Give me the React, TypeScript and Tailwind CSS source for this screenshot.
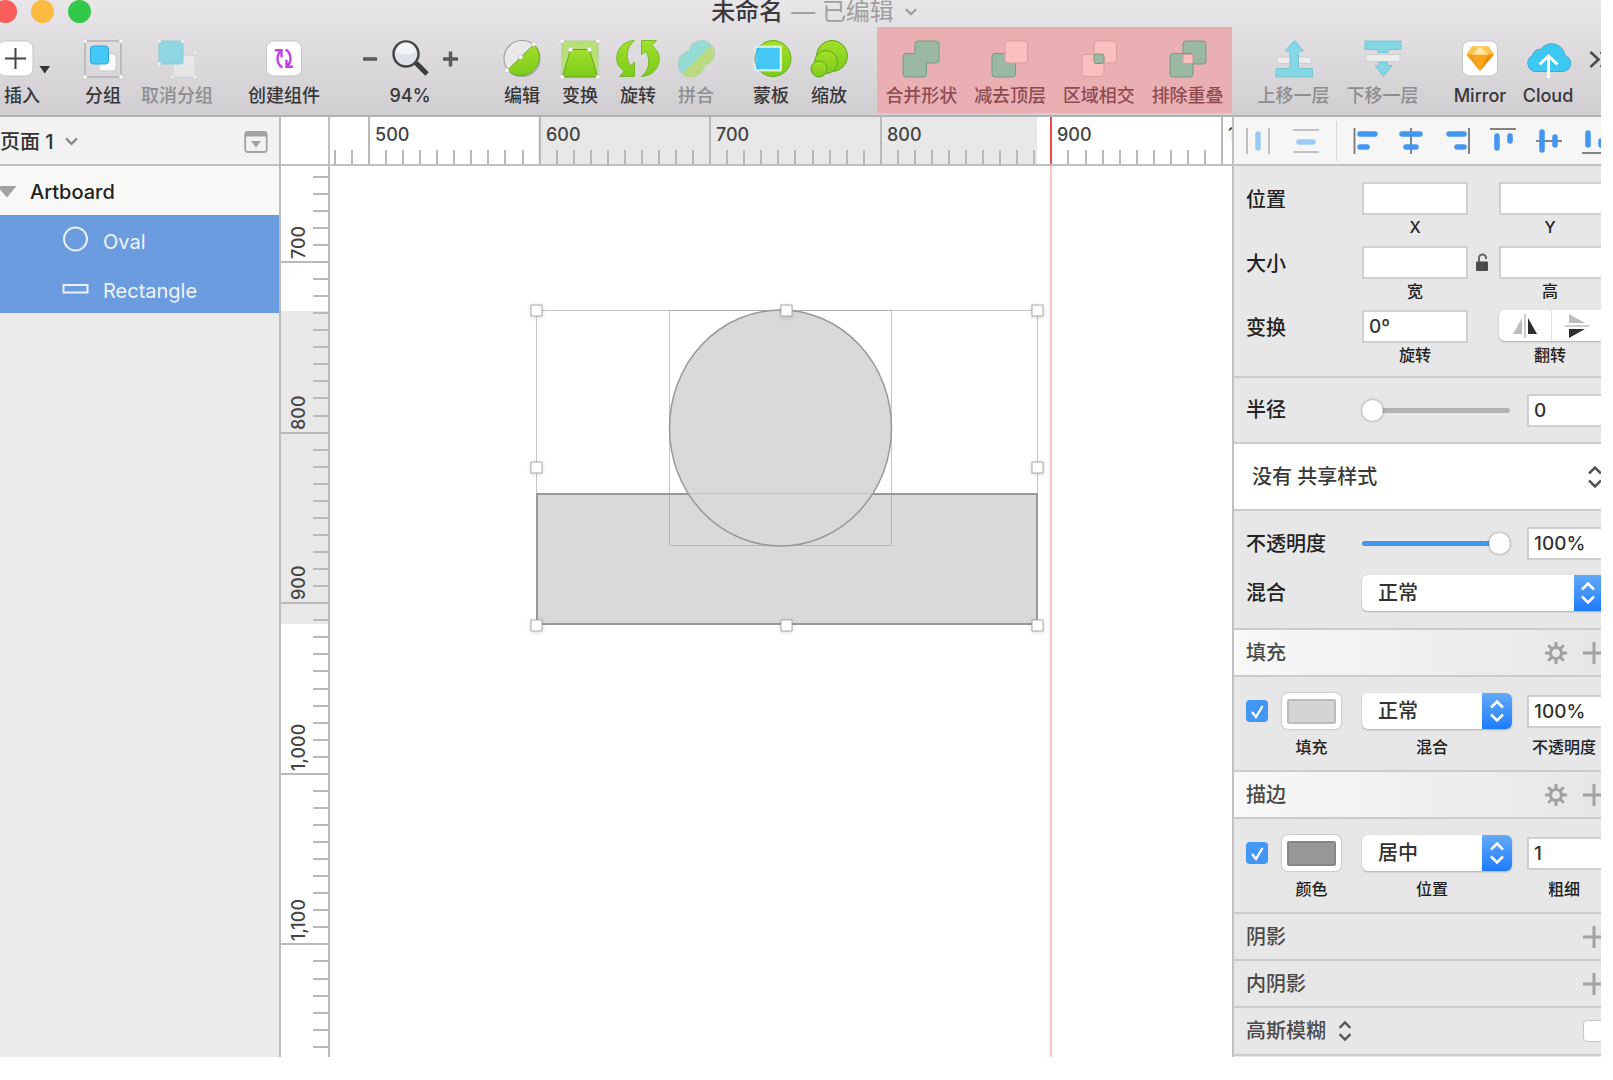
import React, { useState } from "react";
import { ChevronDown } from "lucide-react";

const GREEN = "#7ccb1c";
const BLUE = "#45c8f5";

type Shape = { children: React.ReactNode; w?: number; faded?: boolean };

function Icon({ children, w = 38, faded }: Shape) {
  return (
    <svg
      width={w}
      height={38}
      viewBox={`0 0 ${w} 38`}
      className={`overflow-visible ${faded ? "opacity-55" : ""}`}
      aria-hidden="true"
    >
      {children}
    </svg>
  );
}

function Dots({ points }: { points: number[][] }) {
  return (
    <>
      {points.map(([x, y]) => (
        <circle key={`${x}-${y}`} cx={x} cy={y} r="2.2" fill="#fff" stroke="#bbb" strokeWidth=".6" />
      ))}
    </>
  );
}

function Tool({
  label,
  width,
  muted,
  children,
}: {
  label: string;
  width: string;
  muted?: boolean;
  children: React.ReactNode;
}) {
  return (
    <button
      className={`flex shrink-0 flex-col items-center gap-1.5 whitespace-nowrap pt-[13px] text-lg leading-6 ${width} ${muted ? "text-[#8f8d90]" : "text-[#38373a]"}`}
    >
      {children}
      <span>{label}</span>
    </button>
  );
}

function GroupTools() {
  return (
    <>
      <button className="flex w-[54px] shrink-0 flex-col gap-1.5 pt-[13px] text-lg leading-6 text-[#38373a]">
        <Icon w={54}>
          <rect x="-2" y="1" width="35" height="35" rx="7" fill="#fff" stroke="#c4c2c4" />
          <path d="M15.500 8v21M5 18.500h21" stroke="#444" strokeWidth="2" />
          <path d="M39.500 26h10.500l-5.250 7.500z" fill="#333" />
        </Icon>
        <span className="w-11 text-center">插入</span>
      </button>
      <div className="w-4 shrink-0" />
      <Tool label="分组" width="w-[66px]">
        <Icon>
          <rect x="1" y="1" width="36" height="36" fill="none" stroke="#b4b2b4" strokeWidth="1.500" />
          <rect x="15" y="14" width="17" height="17" rx="3" fill="#fafafa" stroke="#ccc" />
          <rect x="6.500" y="6" width="18" height="18" rx="3" fill={BLUE} stroke="#2ba9dc" />
          <Dots points={[[1, 1], [37, 1], [1, 37], [37, 37]]} />
        </Icon>
      </Tool>
      <Tool label="取消分组" width="w-[82px]" muted>
        <Icon faded>
          <rect x="15" y="15" width="22" height="22" rx="3" fill="#f3f3f3" stroke="#ccc" />
          <rect x="1" y="1" width="24" height="23" rx="2" fill="#51d2e8" stroke="#4cbfd4" />
          <Dots points={[[1, 1], [25, 1], [1, 24], [37, 13], [14, 37], [37, 37]]} />
        </Icon>
      </Tool>
      <div className="w-[25px] shrink-0" />
      <Tool label="创建组件" width="w-[82px]">
        <Icon>
          <rect x="1.500" y="1" width="35" height="35" rx="7" fill="#fff" stroke="#c4c2c4" />
          <g stroke="#c043e4" strokeWidth="2.400" fill="none">
            <path d="M17.500 27.500C11.500 24 11 16 15.500 11M10 10.200h6.500v7" />
            <path d="M20.500 9.500C26.500 13 27 21 22.500 26M28 26.800h-6.500v-7" />
          </g>
        </Icon>
      </Tool>
    </>
  );
}

function ZoomTools() {
  return (
    <div className="flex w-[100px] shrink-0 flex-col items-center gap-1.5 pt-[13px] text-lg leading-6 text-[#38373a]">
      <div className="flex h-[38px] w-full items-center justify-between">
        <button aria-label="缩小">
          <svg width="18" height="18" viewBox="0 0 18 18">
            <path d="M3 9h14" stroke="#5a595b" strokeWidth="3.500" />
          </svg>
        </button>
        <Icon>
          <circle cx="15" cy="14" r="12.500" fill="#dde3e8" stroke="#454548" strokeWidth="2.500" />
          <path d="M5 12a10 10 0 0 1 20 0q-10 5-20 0" fill="#fff" opacity=".6" />
          <path d="M25 23l11 11" stroke="#3c3c3e" strokeWidth="5" />
        </Icon>
        <button aria-label="放大">
          <svg width="18" height="18" viewBox="0 0 18 18">
            <path d="M1 9h15M8.500 1.500v15" stroke="#5a595b" strokeWidth="3.500" />
          </svg>
        </button>
      </div>
      <span>94%</span>
    </div>
  );
}

function EditTools() {
  return (
    <>
      <Tool label="编辑" width="w-[58px]">
        <Icon>
          <circle cx="19" cy="18.500" r="18" fill="#e9e8ea" stroke="#a3a1a4" strokeWidth="1.200" />
          <path d="M31 4.500A18 18 0 1 1 4.500 30z" fill="url(#green)" stroke="#68ab1c" />
          <Dots points={[[31, 4], [17.500, 17], [4, 30.500]]} />
        </Icon>
      </Tool>
      <Tool label="变换" width="w-[58px]">
        <Icon>
          <rect x="1" y="1" width="36" height="36" fill="#b7e078" stroke="#b0cf87" />
          <path d="M9.500 9.500h19L36.500 37h-35z" fill="url(#green)" stroke="#68a51c" />
          <Dots points={[[1, 1], [37, 1], [9.500, 9.500], [28.500, 9.500], [1, 37], [37, 37]]} />
        </Icon>
      </Tool>
      <Tool label="旋转" width="w-[58px]">
        <Icon w={44}>
          <g fill="url(#green)" stroke="#69b01a" strokeWidth=".8">
            <path d="M18.500 .500C5 1-3 14 2.500 25.500L8 31.500 3.500 36.500H18.500V22L14.500 26C9 18 10.500 7 18.500 .500z" />
            <path d="M25.500 36.500C39 36 47 23 41.500 11.500L36 5.500 40.500 .500H25.500V15L29.500 11C35 19 33.500 30 25.500 36.500z" />
          </g>
        </Icon>
      </Tool>
      <Tool label="拼合" width="w-[58px]" muted>
        <Icon faded>
          <path
            d="M12 11C13 3 19 .500 25 .500A12.500 12.500 0 0 1 37.500 13C37.500 21 32 24 28 25C26 32 21 37 14 37A13 13 0 0 1 1 24.500C1 17 5 13 12 11z"
            fill="#59dccb"
            stroke="#8bbfae"
          />
          <path
            d="M34.500 5A12.500 12.500 0 0 1 37.500 13C37.500 21 32 24 28 25C26 32 21 37 14 37A13 13 0 0 1 5 33.500z"
            fill="#a4db35"
          />
        </Icon>
      </Tool>
      <div className="w-[17px] shrink-0" />
      <Tool label="蒙板" width="w-[58px]">
        <Icon>
          <circle cx="21" cy="18.500" r="18" fill="url(#green)" stroke="#68ab1c" />
          <path d="M1.500 6v25h28V6z" fill="none" stroke="#d5e4e8" strokeWidth="1" />
          <path d="M3.500 7h25v23h-25z" fill={BLUE} stroke="#e4f5f0" strokeWidth="1.500" />
          <path d="M7 7.800C2 14 2 23 7 29.500" fill="none" stroke="#36a7c4" />
        </Icon>
      </Tool>
      <Tool label="缩放" width="w-[58px]">
        <Icon>
          <g fill="url(#green)" stroke="#62a51c">
            <circle cx="22" cy="16" r="15.500" />
            <circle cx="16" cy="22" r="11.500" />
            <circle cx="9" cy="29" r="8" />
          </g>
        </Icon>
      </Tool>
    </>
  );
}

// the four boolean operations share the same two overlapping squares
function BooleanTools() {
  const dark = { fill: "#9bb9a2", stroke: "#769b80" };
  const light = { fill: "#fbbfc2", stroke: "#dd9a9f" };
  const item =
    "flex flex-1 flex-col items-center gap-1.5 whitespace-nowrap pt-[13px] text-lg leading-6 text-[#8e4c52]";
  return (
    <div className="mb-0.5 flex w-[355px] shrink-0 bg-[#e9afb2]">
      <button className={item}>
        <Icon>
          <path
            d="M16 1h18a3 3 0 0 1 3 3v16a3 3 0 0 1-3 3H24.500v11a3 3 0 0 1-3 3H4a3 3 0 0 1-3-3V16.500a3 3 0 0 1 3-3h9V4a3 3 0 0 1 3-3z"
            {...dark}
          />
        </Icon>
        <span>合并形状</span>
      </button>
      <button className={item}>
        <Icon>
          <rect x="1" y="13.500" width="23.500" height="23.500" rx="3" {...dark} />
          <rect x="14" y="1" width="22.500" height="22" rx="3" {...light} />
        </Icon>
        <span>减去顶层</span>
      </button>
      <button className={item}>
        <Icon>
          <rect x="14" y="1" width="22.500" height="22" rx="3" {...light} />
          <rect x="2" y="14.500" width="22" height="22" rx="3" {...light} />
          <rect x="14" y="14" width="10" height="9.500" rx="2" {...dark} />
        </Icon>
        <span>区域相交</span>
      </button>
      <button className={item}>
        <Icon>
          <rect x="14" y="1" width="23" height="23" rx="3" {...dark} />
          <rect x="1" y="13.500" width="23" height="23.500" rx="3" {...dark} />
          <rect x="14" y="14.500" width="10" height="9" rx="2" {...light} />
        </Icon>
        <span>排除重叠</span>
      </button>
    </div>
  );
}

function LayerTools() {
  return (
    <>
      <Tool label="上移一层" width="w-[89px]" muted>
        <Icon>
          <path d="M2 17h34v6.500H2z" fill="#ececed" stroke="#cfcfd1" />
          <path d="M19.500 .500l9 10.500h-5v17.500h14V37H1v-8.500h14V11h-5z" fill="#84d8e6" stroke="#79c5d3" />
        </Icon>
      </Tool>
      <Tool label="下移一层" width="w-[89px]" muted>
        <Icon>
          <path d="M1 1h36v8.500H24v3H14v-3H1z" fill="#84d8e6" stroke="#79c5d3" />
          <path d="M2 14.500h34v7H2z" fill="#ececed" stroke="#cfcfd1" />
          <path d="M15 22h8.500v3.500H28L19.500 36.500 11 25.500h4z" fill="#84d8e6" stroke="#79c5d3" />
        </Icon>
      </Tool>
      <div className="w-[18px] shrink-0" />
      <Tool label="Mirror" width="w-[70px]">
        <Icon>
          <rect x="1.500" y="1" width="35" height="35" rx="7" fill="#fff" stroke="#c4c2c4" />
          <path d="M11 6.500h16.500L33 14.500 19 31 5.500 14.500z" fill="#f8a61c" />
          <path d="M11 6.500h16.500L33 14.500H5.500z" fill="#fbc54e" />
          <path d="M19 6.500l8 8H11z" fill="#fde9ae" />
          <path d="M27 14.500H33L19 31z" fill="#ec8d12" />
          <path d="M11 14.500H5.500L19 31z" fill="#f59b17" />
        </Icon>
      </Tool>
      <Tool label="Cloud" width="w-[66px]">
        <Icon w={44}>
          <path
            d="M9 31.500A8.500 8.500 0 0 1 6.500 15.500A7 7 0 0 1 14.500 9.500A13.500 13.500 0 0 1 39 15.500A8.200 8.200 0 0 1 36 31.500z"
            fill="#3bc8f3"
            stroke="#48abc9"
          />
          <path d="M22.500 38V17M13.500 24.500l9-8.500 9 8.500" fill="none" stroke="#fff" strokeWidth="3" />
        </Icon>
      </Tool>
      <button aria-label="更多" className="ml-2 flex shrink-0 pt-[13px]">
        <Icon w={24}>
          <path d="M1.500 12l8 7.500-8 7.500M11.500 12l8 7.500-8 7.500" fill="none" stroke="#4a494b" strokeWidth="2.500" />
        </Icon>
      </button>
    </>
  );
}

function Toolbar() {
  return (
    <header className="flex shrink-0 flex-col overflow-hidden border-b-2 border-[#b3b1b3] bg-linear-to-b from-[#e8e6e9] to-[#d0ced1]">
      <svg width="0" height="0" className="absolute" aria-hidden="true">
        <linearGradient id="green" x1="0" y1="0" x2="0" y2="1">
          <stop offset="0" stopColor="#a2e02a" />
          <stop offset="1" stopColor={GREEN} />
        </linearGradient>
      </svg>
      <div className="flex h-[27px] items-start">
        <div className="-ml-1.5 flex flex-1 gap-3.5">
          <span className="size-[23px] rounded-full bg-[#fb5f5b]" />
          <span className="size-[23px] rounded-full bg-[#fcbb40]" />
          <span className="size-[23px] rounded-full bg-[#34c84a]" />
        </div>
        <h1 className="flex items-center gap-2 pl-9 text-2xl leading-6 text-[#3b3a3c]">
          未命名 <span className="font-normal text-[#a09ea1]">— 已编辑</span>
          <ChevronDown size={18} className="text-[#a09ea1]" strokeWidth={3} />
        </h1>
        <div className="flex-1" />
      </div>
      <div className="flex h-[88px]">
        <GroupTools />
        <div className="w-[35px] shrink-0" />
        <ZoomTools />
        <div className="w-[33px] shrink-0" />
        <EditTools />
        <div className="w-[19px] shrink-0" />
        <BooleanTools />
        <div className="w-[17px] shrink-0" />
        <LayerTools />
      </div>
    </header>
  );
}

function Sidebar() {
  const layers = ["Oval", "Rectangle"];
  return (
    <aside className="flex w-[281px] shrink-0 flex-col border-r-2 border-[#bdbdbd] bg-[#ebebeb]">
      <div className="flex h-[49px] items-center justify-between border-b-2 border-[#c0c0c0] bg-[#f2f2f2] pt-0.5 pr-[11px]">
        <button className="flex items-center gap-2 text-xl text-[#333]">
          页面 1
          <ChevronDown size={19} strokeWidth={3} className="text-[#8a8a8a]" />
        </button>
        <button aria-label="筛选">
          <svg width="24" height="24" viewBox="0 0 24 24">
            <rect x="1.200" y="2" width="21.500" height="20" rx="2.500" fill="none" stroke="#a3a3a3" strokeWidth="1.800" />
            <path d="M1.500 2.500h21v4h-21z" fill="#a3a3a3" />
            <path d="M7 11h10l-5 6.500z" fill="#a3a3a3" />
          </svg>
        </button>
      </div>
      <div className="flex h-[49px] items-center bg-[#f8f8f7] pt-0.5 text-xl font-medium text-[#222]">
        <svg width="30" height="12" viewBox="0 0 30 12">
          <path d="M-3 0h19.500L7 11.500z" fill="#a2a2a2" />
        </svg>
        Artboard
      </div>
      <ul className="bg-[#6c9ce0] text-xl font-normal text-[#eef4fd]">
        {layers.map((name) => (
          <li key={name} className="flex h-[49px] items-center gap-3.5 pt-1 pl-[62px]">
            <svg width="27" height="27" viewBox="0 0 27 27" className="-mt-1.5">
              {name === "Oval" ? (
                <circle cx="13.500" cy="14" r="11.500" fill="none" stroke="#e9f1fc" strokeWidth="2" />
              ) : (
                <rect x="1.500" y="11" width="24" height="7.500" fill="none" stroke="#e9f1fc" strokeWidth="2" />
              )}
            </svg>
            {name}
          </li>
        ))}
      </ul>
    </aside>
  );
}

const STEP = 17.06;

function ticks(firstMajor: number, from: number, to: number) {
  const out: { pos: number; major: boolean; value: number }[] = [];
  for (let n = from; n <= to; n++) {
    out.push({
      pos: Math.round(firstMajor + n * STEP),
      major: n % 10 === 0,
      value: n * 10,
    });
  }
  return out;
}

function TopRuler() {
  return (
    <div className="h-[49px] border-b-2 border-[#c0c0c0] bg-white">
      <svg width="100%" height="47" className="block text-lg">
        <rect x="208" width="499" height="47" fill="#e8e8e8" />
        {ticks(39, -2, 50).map((t) => (
          <g key={t.pos}>
            <path
              d={`M${t.pos} ${t.major ? 0 : 33}V47`}
              stroke={t.value === 400 ? "#f0474d" : "#b9b9b9"}
              strokeWidth="2"
            />
            {t.major && (
              <text x={t.pos + 6} y="24" fill="#444" fontWeight="500">
                {t.value === 500 ? "1,000" : t.value + 500}
              </text>
            )}
          </g>
        ))}
      </svg>
    </div>
  );
}

function LeftRuler() {
  return (
    <div className="w-[49px] shrink-0 border-r-2 border-[#b9b9b9] bg-white">
      <svg width="47" height="100%" className="block text-lg">
        <rect y="145" width="47" height="313" fill="#e8e8e8" />
        {ticks(96, -5, 46).map((t) => (
          <g key={t.pos}>
            <path d={`M${t.major ? 0 : 32} ${t.pos}H47`} stroke="#b9b9b9" strokeWidth="2" />
            {t.major && (
              <text transform={`translate(24 ${t.pos - 3}) rotate(-90)`} fill="#444" fontWeight="500">
                {(t.value + 700).toLocaleString("en-US")}
              </text>
            )}
          </g>
        ))}
      </svg>
    </div>
  );
}

function Artboard() {
  const handles = [
    [206, 144], [456, 144], [707, 144],
    [206, 301], [707, 301],
    [206, 459], [456, 459], [707, 459],
  ];
  return (
    <svg width="100%" height="100%" className="block">
      <rect x="207" y="328" width="500" height="130" fill="#d9d9d9" stroke="#999" strokeWidth="2" />
      <ellipse cx="450.500" cy="262" rx="111" ry="118" fill="#d9d9d9" stroke="#999" strokeWidth="1.500" />
      <g fill="none" stroke="#999" strokeOpacity=".55">
        <rect x="339.500" y="144.500" width="222" height="235" />
        <rect x="206.500" y="144.500" width="501" height="314" />
        <path d="M340 327.500h222" strokeOpacity=".35" />
      </g>
      <path d="M721 0v2000" stroke="#fac3c6" strokeWidth="2" />
      {handles.map(([x, y]) => (
        <rect
          key={`${x}-${y}`}
          x={x - 5}
          y={y - 5}
          width="11"
          height="11"
          fill="#fff"
          stroke="#aaa"
          className="drop-shadow-sm"
        />
      ))}
    </svg>
  );
}

function AlignBar() {
  const items = [
    { name: "左对齐", line: "M2.500 0v26", bars: "M8 6h15M8 19h7" },
    { name: "水平居中", line: "M13 0v26", bars: "M4 6h18M8 19h10" },
    { name: "右对齐", line: "M25 0v26", bars: "M5 6h15M13 19h7" },
    { name: "顶对齐", line: "M0 1h26", bars: "M7 8v12M20 8v5" },
    { name: "垂直居中", line: "M0 13h26", bars: "M6 4v18M19 9v8" },
    { name: "底对齐", line: "M0 25h26", bars: "M6 5v12M19 13v4" },
  ];
  return (
    <div className="flex h-[49px] shrink-0 items-center overflow-hidden border-b-2 border-[#c0c0c0] bg-[#f6f6f6]">
      <button aria-label="水平分布" className="flex w-12 shrink-0 justify-center">
        <svg width="26" height="26" viewBox="0 0 26 26">
          <path d="M2 0v26M24 0v26" stroke="#c2c2c2" strokeWidth="2" />
          <path d="M13 6v14" stroke="#9acbf6" strokeWidth="5.500" strokeLinecap="round" />
        </svg>
      </button>
      <button aria-label="垂直分布" className="flex w-12 shrink-0 justify-center">
        <svg width="26" height="26" viewBox="0 0 26 26">
          <path d="M0 2h26M0 24h26" stroke="#c2c2c2" strokeWidth="2" />
          <path d="M6 14h14" stroke="#9acbf6" strokeWidth="5.500" strokeLinecap="round" />
        </svg>
      </button>
      <div className="mr-[5px] ml-1.5 h-10 w-px shrink-0 bg-[#d6d6d6]" />
      {items.map((item) => (
        <button key={item.name} aria-label={item.name} className="flex w-[46px] shrink-0 justify-center">
          <svg width="26" height="26" viewBox="0 0 26 26">
            <path d={item.line} stroke="#777" strokeWidth="1.800" />
            <path d={item.bars} stroke="#4397f3" strokeWidth="5.500" strokeLinecap="round" />
          </svg>
        </button>
      ))}
    </div>
  );
}

function Field({ label, value = "" }: { label: string; value?: string }) {
  return (
    <input
      aria-label={label}
      defaultValue={value}
      className="h-[33px] w-full min-w-0 border-2 border-[#cfcfcf] bg-white px-[5px] text-[19px] text-[#333] outline-none"
    />
  );
}

// field that runs under the right edge of the panel
function EdgeField({ label, value = "" }: { label: string; value?: string }) {
  return (
    <input
      aria-label={label}
      defaultValue={value}
      className="h-[33px] w-full min-w-0 border-2 border-r-0 border-[#cfcfcf] bg-white pl-[5px] text-[19px] text-[#333] outline-none"
    />
  );
}

function UpDown({ color, size = 20 }: { color: string; size?: number }) {
  return (
    <svg width={size} height="24" viewBox="0 0 20 24" fill="none" stroke={color} strokeWidth="2.500">
      <path d="M4 8.500l6-6 6 6M4 15.500l6 6 6-6" />
    </svg>
  );
}

function Select({ label, value, edge }: { label: string; value: string; edge?: boolean }) {
  return (
    <div className="relative h-9 w-full">
      <select
        aria-label={label}
        className={`h-9 w-full appearance-none bg-white pl-4 text-xl leading-6 text-[#333] shadow-[0_1px_2px_#00000040] ${edge ? "rounded-l-md" : "rounded-md"}`}
      >
        <option>{value}</option>
      </select>
      <span
        className={`pointer-events-none absolute inset-y-0 right-0 flex items-center justify-center bg-linear-to-b from-[#62aaf9] to-[#1a7bfb] ${edge ? "w-[27px]" : "w-[30px] rounded-r-md"}`}
      >
        <UpDown color="#fff" />
      </span>
    </div>
  );
}

function Check({ label }: { label: string }) {
  const [on, setOn] = useState(true);
  return (
    <span className="relative flex size-[22px]">
      <input
        type="checkbox"
        aria-label={label}
        checked={on}
        onChange={() => setOn(!on)}
        className="size-[22px] appearance-none rounded bg-white checked:bg-[#4397f4]"
      />
      <svg viewBox="0 0 22 22" className="pointer-events-none absolute inset-0">
        <path d="M6 12l4 5L16.500 6" fill="none" stroke="#fff" strokeWidth="2.300" />
      </svg>
    </span>
  );
}

function Plus() {
  return (
    <button aria-label="添加" className="flex shrink-0">
      <svg width="22" height="22" viewBox="0 0 22 22">
        <path d="M0 11h22M11 0v22" stroke="#a2a2a2" strokeWidth="3" />
      </svg>
    </button>
  );
}

function Gear() {
  return (
    <button aria-label="设置" className="flex shrink-0">
      <svg width="22" height="22" viewBox="0 0 22 22" fill="none" stroke="#a2a2a2">
        <circle cx="11" cy="11" r="5.500" strokeWidth="3.200" />
        <path
          d="M11 0v5M11 17v5M0 11h5M17 11h5M3.200 3.200l3.600 3.600M15.200 15.200l3.600 3.600M3.200 18.800l3.600-3.600M15.200 6.800l3.600-3.600"
          strokeWidth="3"
        />
      </svg>
    </button>
  );
}

function Title({ children, gear, bright }: { children: string; gear?: boolean; bright?: boolean }) {
  return (
    <div
      className={`flex h-[47px] items-center overflow-hidden border-b-2 border-[#cbcbcb] pl-3 text-xl text-[#4a4a4a] ${bright ? "bg-linear-to-r from-[#f8f8f8] to-[#e7e7e7]" : ""}`}
    >
      <h2 className="flex-1">{children}</h2>
      {gear && <Gear />}
      <div className="-mr-1 ml-4">
        <Plus />
      </div>
    </div>
  );
}

function PaintRow({
  name,
  color,
  swatch,
  select,
  selectLabel,
  value,
  valueLabel,
}: {
  name: string;
  color: string;
  swatch: string;
  select: string;
  selectLabel: string;
  value: string;
  valueLabel: string;
}) {
  return (
    <section className="grid h-[95px] grid-cols-[36px_59px_21px_150px_15px_1fr] content-start items-center gap-y-1.5 border-b-2 border-[#cbcbcb] pt-4 pl-3 text-center text-base leading-6">
      <Check label={name} />
      <button aria-label={color} className="h-9 rounded-md bg-white p-[5px] shadow-[0_0_2px_#00000060]">
        <span className={`block h-[25px] rounded-xs border-2 ${swatch}`} />
      </button>
      <span />
      <Select label={selectLabel} value={select} />
      <span />
      <EdgeField label={valueLabel} value={value} />
      <span />
      <span>{color}</span>
      <span />
      <span className="pr-2.5">{selectLabel}</span>
      <span />
      <span className="whitespace-nowrap">{valueLabel}</span>
    </section>
  );
}

function Slider({ label, value, track }: { label: string; value: number; track: string }) {
  return (
    <input
      type="range"
      aria-label={label}
      defaultValue={value}
      className={`h-6 w-[148px] appearance-none bg-transparent [&::-webkit-slider-runnable-track]:h-[5px] [&::-webkit-slider-runnable-track]:rounded-full [&::-webkit-slider-thumb]:-mt-2 [&::-webkit-slider-thumb]:size-[21px] [&::-webkit-slider-thumb]:appearance-none [&::-webkit-slider-thumb]:rounded-full [&::-webkit-slider-thumb]:bg-white [&::-webkit-slider-thumb]:shadow-[0_0_3px_#00000070] ${track}`}
    />
  );
}

function Inspector() {
  const row = "grid grid-cols-[116px_106px_31px_1fr] text-center";
  const name = "text-left text-xl leading-9";
  const sub = "pb-[7px] text-base leading-6";
  return (
    <aside className="flex w-[369px] shrink-0 flex-col overflow-hidden border-l-2 border-[#c0c0c0] bg-[#e7e7e7] text-[#222]">
      <AlignBar />
      <section className="h-[212px] border-b-2 border-[#cbcbcb] pt-4 pl-3">
        <div className={`${row} grid-rows-[33px_31px]`}>
          <span className={name}>位置</span>
          <Field label="X" />
          <span />
          <EdgeField label="Y" />
          <span />
          <span className={sub}>X</span>
          <span />
          <span className={sub}>Y</span>
        </div>
        <div className={`${row} grid-rows-[33px_31px]`}>
          <span className={name}>大小</span>
          <Field label="宽" />
          <button aria-label="锁定比例" className="flex items-center justify-center pr-1">
            <svg width="14" height="20" viewBox="0 0 14 20">
              <rect x="1" y="8.500" width="12" height="9.500" rx="1" fill="#4b4b4b" />
              <path d="M4 9V5a3.500 3.500 0 0 1 7 0v1" fill="none" stroke="#666" strokeWidth="2" />
            </svg>
          </button>
          <EdgeField label="高" />
          <span />
          <span className={sub}>宽</span>
          <span />
          <span className={sub}>高</span>
        </div>
        <div className={`${row} grid-rows-[33px_31px]`}>
          <span className={name}>变换</span>
          <Field label="旋转" value="0º" />
          <span />
          <div className="grid h-[31px] grid-cols-[53px_1fr] overflow-hidden rounded-l-md bg-white shadow-[0_1px_2px_#00000040]">
            <button aria-label="水平翻转" className="flex items-center justify-center border-r border-[#e4e4e4]">
              <svg width="24" height="24" viewBox="0 0 24 24">
                <path d="M9 4v16H0z" fill="#bdbdbd" />
                <path d="M12 0v24" stroke="#bbb" strokeWidth="1.500" />
                <path d="M15 4v16h9z" fill="#2d2d2d" />
              </svg>
            </button>
            <button aria-label="垂直翻转" className="flex items-center justify-center">
              <svg width="24" height="24" viewBox="0 0 24 24">
                <path d="M4 9V0l16 9z" fill="#bdbdbd" />
                <path d="M0 12h24" stroke="#bbb" strokeWidth="1.500" />
                <path d="M4 15v9l16-9z" fill="#2d2d2d" />
              </svg>
            </button>
          </div>
          <span />
          <span className={sub}>旋转</span>
          <span />
          <span className={sub}>翻转</span>
        </div>
      </section>
      <section className="grid h-[66px] grid-cols-[116px_165px_1fr] items-center border-b-2 border-[#cbcbcb] pl-3">
        <span className="text-xl">半径</span>
        <Slider
          label="半径"
          value={0}
          track="[&::-webkit-slider-runnable-track]:bg-[#b3b3b3]"
        />
        <EdgeField label="半径数值" value="0" />
      </section>
      <button className="flex h-[67px] items-center justify-between border-b-2 border-[#cbcbcb] bg-white pl-[18px] text-xl text-[#3a3a3a]">
        没有 共享样式
        <span className="-mr-1">
          <UpDown color="#555" size={20} />
        </span>
      </button>
      <section className="h-[119px] border-b-2 border-[#cbcbcb] pt-4 pl-3">
        <div className="grid grid-cols-[116px_165px_1fr] items-center">
          <span className="text-xl">不透明度</span>
          <Slider
            label="不透明度"
            value={100}
            track="[&::-webkit-slider-runnable-track]:bg-[#4397f3]"
          />
          <EdgeField label="不透明度数值" value="100%" />
        </div>
        <div className="mt-[15px] grid grid-cols-[116px_1fr] items-center">
          <span className="text-xl">混合</span>
          <Select label="混合" value="正常" edge />
        </div>
      </section>
      <Title gear bright>填充</Title>
      <PaintRow
        name="启用填充"
        color="填充"
        swatch="border-[#bcbcbc] bg-[#d4d4d4]"
        select="正常"
        selectLabel="混合"
        value="100%"
        valueLabel="不透明度"
      />
      <Title gear bright>描边</Title>
      <PaintRow
        name="启用描边"
        color="颜色"
        swatch="border-[#868686] bg-[#979797]"
        select="居中"
        selectLabel="位置"
        value="1"
        valueLabel="粗细"
      />
      <Title>阴影</Title>
      <Title>内阴影</Title>
      <div className="flex h-12 items-center overflow-hidden border-b-2 border-[#cbcbcb] pl-3 text-xl text-[#4a4a4a]">
        <button className="flex flex-1 items-center gap-2.5">
          高斯模糊
          <UpDown color="#555" size={18} />
        </button>
        <input
          type="checkbox"
          aria-label="高斯模糊"
          className="-mr-1 size-[22px] shrink-0 appearance-none rounded border border-[#c4c4c4] bg-white"
        />
      </div>
    </aside>
  );
}

export default function App() {
  return (
    <div className="flex h-screen flex-col overflow-hidden bg-white pr-3 pb-[23px] font-['Inter','Noto_Sans_CJK_SC',sans-serif] font-medium">
      <Toolbar />
      <div className="flex min-h-0 flex-1">
        <Sidebar />
        <main className="flex min-w-0 flex-1 flex-col">
          <div className="flex">
            <div className="h-[49px] w-[49px] shrink-0 border-r-2 border-b-2 border-[#c0c0c0]" />
            <div className="min-w-0 flex-1">
              <TopRuler />
            </div>
          </div>
          <div className="flex min-h-0 flex-1">
            <LeftRuler />
            <div className="min-w-0 flex-1">
              <Artboard />
            </div>
          </div>
        </main>
        <Inspector />
      </div>
    </div>
  );
}
